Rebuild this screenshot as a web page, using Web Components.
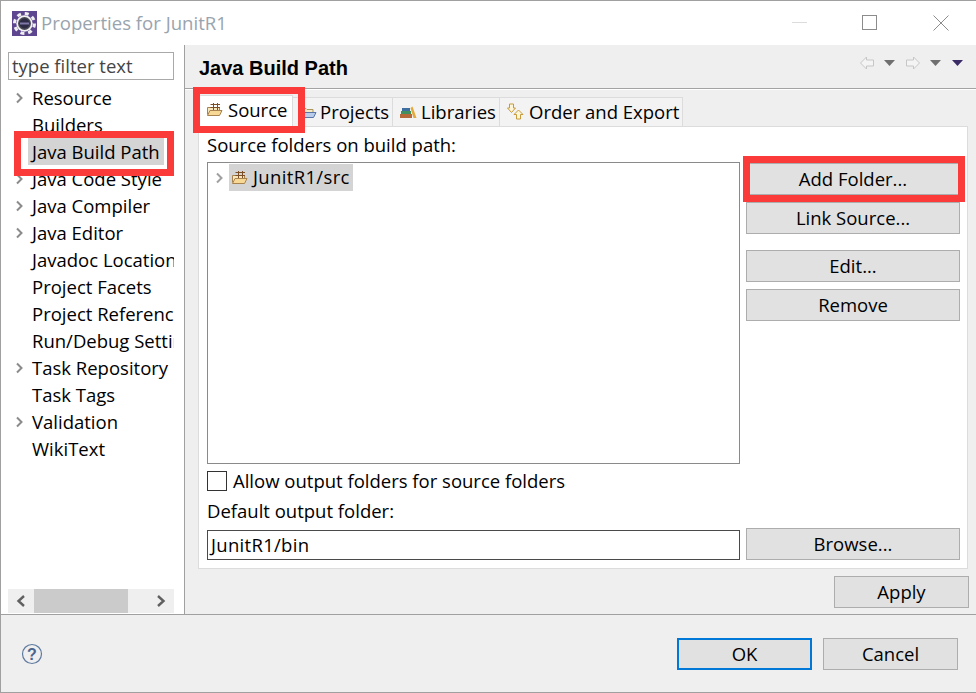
<!DOCTYPE html>
<html>
<head>
<meta charset="utf-8">
<title>Properties for JunitR1</title>
<style>
  html, body { margin: 0; padding: 0; background: #fff; }
  body { font: 18.5px "Open Sans", "Noto Sans", sans-serif; color: #000; }
</style>
</head>
<body>
<prefs-dialog></prefs-dialog>

<script>
const chevron = (color) => `<svg width="9" height="12" viewBox="0 0 9 12"><path d="M2 1.5 L6.5 6 L2 10.5" fill="none" stroke="${color}" stroke-width="2"/></svg>`;

const packageIcon = `<svg width="17" height="15" viewBox="0 0 17 15" style="display:block">
  <path d="M1.500 12.500 V5.500 H13.500 V8" fill="#f8e6bc" stroke="#a8834f"/>
  <path d="M1.500 13.500 L4 8.500 H16 L13.500 13.500 Z" fill="#f7d894" stroke="#a8834f"/>
  <path d="M7.500 1 V8 M11.500 1 V8 M4.500 2.500 H14 M4.500 5.500 H14" fill="none" stroke="#7d4f26"/>
</svg>`;

class TitleBar extends HTMLElement {
  constructor() { super(); this.attachShadow({ mode: 'open' }); }
  connectedCallback() {
    this.shadowRoot.innerHTML = `
    <style>
      :host { display: flex; align-items: center; height: 44px; padding-left: 11px; background: #fff; flex: none; }
      .logo { margin-right: 4px; display: block; }
      .name { color: #99a4ae; font-size: 18.6px; flex: 1; padding-bottom: 1px; }
      .ctl { width: 70.500px; height: 44px; display: flex; align-items: center; justify-content: center; }
    </style>
    <svg class="logo" width="25" height="25" viewBox="0 0 25 25">
      <rect width="25" height="25" fill="#5d4590"/>
      <circle cx="12.500" cy="12.500" r="10" fill="none" stroke="#eeeeee" stroke-width="3" stroke-dasharray="4 3.850"/>
      <circle cx="12.500" cy="12.500" r="8.200" fill="#f2f2f2"/>
      <circle cx="12.500" cy="12.500" r="6.500" fill="#4a4a55"/>
      <circle cx="12.500" cy="12.500" r="5" fill="#2c2a44"/>
      <path d="M8 12.500 h9" stroke="#7f78a8" stroke-width="2"/>
    </svg>
    <span class="name">Properties for JunitR1</span>
    <span class="ctl"><svg width="16" height="2"><rect width="15" height="1" fill="#dcdcdc"/></svg></span>
    <span class="ctl"><svg width="16" height="16"><rect x=".5" y=".5" width="14" height="14" fill="none" stroke="#8c8c8c"/></svg></span>
    <span class="ctl"><svg width="16" height="16"><path d="M.5 .5 L15.500 15.500 M15.500 .5 L.5 15.500" stroke="#8c8c8c"/></svg></span>`;
  }
}

class TreeRow extends HTMLElement {
  constructor() { super(); this.attachShadow({ mode: 'open' }); }
  connectedCallback() {
    const twist = this.hasAttribute('twist') ? chevron('#8b8b8b') : '';
    this.shadowRoot.innerHTML = `
    <style>
      :host { display: flex; align-items: center; height: 27px; white-space: nowrap; }
      .arrow { width: 20px; flex: none; display: flex; justify-content: center; padding-left: 3px; box-sizing: border-box; }
      .label { padding: 0 4px; line-height: 27px; }
      :host([selected]) .label { background: #d4d4d4; }
    </style>
    <span class="arrow">${twist}</span>
    <span class="label"><slot></slot></span>`;
  }
}

class SideBar extends HTMLElement {
  constructor() { super(); this.attachShadow({ mode: 'open' }); }
  connectedCallback() {
    this.shadowRoot.innerHTML = `
    <style>
      :host { display: flex; flex-direction: column; width: 184px; box-sizing: border-box; background: #fff; border-right: 1px solid #a0a0a0; flex: none; padding: 7px 10px 1px 7px; }
      .filter { height: 28px; box-sizing: border-box; border: 1px solid #a9a9a9; line-height: 26px; padding-left: 3px; color: #454545; flex: none; }
      .tree { flex: 1; margin-top: 4px; overflow: hidden; }
      .bar { height: 24px; background: #efefef; display: flex; align-items: center; justify-content: space-between; padding: 0 8px; flex: none; position: relative; }
      .thumb { position: absolute; left: 26px; top: 0; width: 94px; height: 24px; background: #cbcbcb; }
    </style>
    <div class="filter">type filter text</div>
    <div class="tree"><slot></slot></div>
    <div class="bar">
      <svg width="10" height="12" viewBox="0 0 10 12"><path d="M8 1 L2.500 6 L8 11" fill="none" stroke="#606060" stroke-width="2.400"/></svg>
      <span class="thumb"></span>
      <svg width="10" height="12" viewBox="0 0 10 12"><path d="M2 1 L7.500 6 L2 11" fill="none" stroke="#606060" stroke-width="2.400"/></svg>
    </div>`;
  }
}

class PageHeader extends HTMLElement {
  constructor() { super(); this.attachShadow({ mode: 'open' }); }
  connectedCallback() {
    const arrowL = `<svg width="14" height="14" viewBox="0.5 0 14 14"><path d="M7 1 L1 7 L7 13 V10 H14 V4 H7 Z" fill="#f4f4f4" stroke="#c6c6c6"/></svg>`;
    const arrowR = `<svg width="14" height="14" viewBox="0.5 0 14 14"><path d="M8 1 L14 7 L8 13 V10 H1 V4 H8 Z" fill="#f4f4f4" stroke="#c6c6c6"/></svg>`;
    const drop = (c) => `<svg width="11" height="6"><path d="M0 0 H11 L5.500 6 Z" fill="${c}"/></svg>`;
    this.shadowRoot.innerHTML = `
    <style>
      :host { display: flex; align-items: center; height: 44px; box-sizing: border-box; flex: none; padding: 0 13px 0 14px; border-bottom: 1px solid #a3a3a3; box-shadow: 0 1px 0 #fff; }
      .t { font-weight: 700; flex: 1; font-size: 20px; font-family: "Liberation Sans", sans-serif; padding-top: 4px; }
      .tools { display: flex; align-items: center; margin-bottom: 7px; }
      .tools > * { display: block; }
    </style>
    <span class="t">Java Build Path</span>
    <span class="tools">
      ${arrowL}<span style="width:10px"></span>${drop('#6f6f6f')}<span style="width:11px"></span>${arrowR}<span style="width:10px"></span>${drop('#6f6f6f')}<span style="width:11px"></span>${drop('#3a2a66')}
    </span>`;
  }
}

class TabItem extends HTMLElement {
  constructor() { super(); this.attachShadow({ mode: 'open' }); }
  connectedCallback() {
    this.shadowRoot.innerHTML = `
    <style>
      :host { display: flex; align-items: center; gap: var(--gap, 4px); height: 29px; box-sizing: border-box; padding: 0 0 2px 7px; background: #f3f3f3; border: 1px solid #dcdcdc; border-left: none; border-bottom: none; white-space: nowrap; margin-top: 2px; width: var(--w); }
      :host([active]) { background: #fff; height: 32px; margin-top: 0; border-left: 1px solid #dcdcdc; z-index: 1; padding: 0 0 5px 7px; gap: 5px; margin-bottom: -1px; }
    </style>
    <slot name="icon"></slot><span><slot></slot></span>`;
  }
}

class PushButton extends HTMLElement {
  constructor() { super(); this.attachShadow({ mode: 'open' }); }
  connectedCallback() {
    this.shadowRoot.innerHTML = `
    <style>
      :host { display: flex; align-items: center; justify-content: center; box-sizing: border-box; height: 32px; padding-bottom: 2px; background: #e1e1e1; border: 1px solid #adadad; white-space: nowrap; flex: none; }
      :host([primary]) { border: 2px solid #0078d7; }
    </style>
    <slot></slot>`;
  }
}

class SourcePage extends HTMLElement {
  constructor() { super(); this.attachShadow({ mode: 'open' }); }
  connectedCallback() {
    this.shadowRoot.innerHTML = `
    <style>
      :host { display: block; background: #fff; border: 1px solid #dcdcdc; height: 443px; box-sizing: border-box; margin-right: 8px; padding: 5px 8px 0 8px; }
      .cap { height: 26px; line-height: 26px; }
      .split { display: grid; grid-template-columns: 533px 214px; column-gap: 6px; }
      .tree { height: 302px; margin-top: 4px; box-sizing: border-box; border: 1px solid #8a8a8a; padding: 1px 0 0 0; }
      .btns { display: flex; flex-direction: column; margin-top: 5px; }
      .check { display: flex; align-items: center; height: 34px; gap: 6px; }
      .check span:last-child { padding-bottom: 2px; }
      .box { width: 20px; height: 20px; box-sizing: border-box; border: 1px solid #333; background: #fff; }
      .field { height: 30px; box-sizing: border-box; border: 1px solid #4a4a4a; padding-left: 3px; line-height: 27px; margin-top: 5px; letter-spacing: .3px; }
      .row { align-items: center; }
      .row push-button { margin-top: 4px; }
      .node { display: flex; align-items: center; height: 27px; }
      .twist { width: 22px; display: flex; justify-content: center; flex: none; }
      .sel { display: flex; align-items: center; gap: 5px; background: #d4d4d4; height: 27px; margin-left: -1px; padding: 0 3px 0 2px; letter-spacing: .35px; }
      .sel span { padding-bottom: 2px; }
    </style>
    <div class="cap">Source folders on build path:</div>
    <div class="split">
      <div class="tree">
        <div class="node">
          <span class="twist">${chevron('#a0a0a0')}</span>
          <span class="sel">${packageIcon}<span>JunitR1/src</span></span>
        </div>
      </div>
      <div class="btns">
        <push-button>Add Folder...</push-button>
        <push-button style="margin-top:7px">Link Source...</push-button>
        <push-button style="margin-top:16px">Edit...</push-button>
        <push-button style="margin-top:7px">Remove</push-button>
      </div>
    </div>
    <div class="check"><span class="box"></span><span>Allow output folders for source folders</span></div>
    <div class="cap">Default output folder:</div>
    <div class="split row">
      <div class="field">JunitR1/bin</div>
      <push-button>Browse...</push-button>
    </div>`;
  }
}

class PrefsDialog extends HTMLElement {
  constructor() { super(); this.attachShadow({ mode: 'open' }); }
  connectedCallback() {
    this.shadowRoot.innerHTML = `
    <style>
      :host { display: flex; flex-direction: column; position: relative; width: 976px; height: 693px; box-sizing: border-box; overflow: hidden; border-top: 1px solid #a0a0a0; border-left: 1px solid #a0a0a0; border-bottom: 1px solid #a0a0a0; background: #fff; }
      .main { display: flex; height: 569px; flex: none; }
      .right { flex: 1; background: #efefef; display: flex; flex-direction: column; min-width: 0; }
      .body { padding: 6px 0 0 13px; flex: 1; }
      .tabs { display: flex; position: relative; height: 32px; margin-bottom: -1px; }
      .apply { display: flex; justify-content: flex-end; padding: 7px 7px 0 0; }
      .foot { flex: 1; display: flex; align-items: center; background: #efefef; border-top: 1px solid #a0a0a0; padding: 0 18px 0 20px; gap: 11px; }
      .foot svg { margin-right: auto; display: block; }
      .foot push-button { padding-bottom: 0; }
      .mark { position: absolute; box-sizing: border-box; border: 7px solid #fb3a3a; pointer-events: none; z-index: 5; }
    </style>
    <title-bar></title-bar>
    <div class="main">
      <side-bar>
        <tree-row twist>Resource</tree-row>
        <tree-row>Builders</tree-row>
        <tree-row selected>Java Build Path</tree-row>
        <tree-row twist>Java Code Style</tree-row>
        <tree-row twist>Java Compiler</tree-row>
        <tree-row twist>Java Editor</tree-row>
        <tree-row>Javadoc Location</tree-row>
        <tree-row>Project Facets</tree-row>
        <tree-row>Project References</tree-row>
        <tree-row>Run/Debug Settings</tree-row>
        <tree-row twist>Task Repository</tree-row>
        <tree-row>Task Tags</tree-row>
        <tree-row twist>Validation</tree-row>
        <tree-row>WikiText</tree-row>
      </side-bar>
      <div class="right">
        <page-header></page-header>
        <div class="body">
          <div class="tabs">
            <tab-item active style="--w:95px">
              <span slot="icon">${packageIcon}</span>Source
            </tab-item>
            <tab-item style="--w:100px;--gap:3px">
              <svg slot="icon" width="17" height="15" viewBox="0 0 17 15"><path d="M1.500 13 V4.500 H6 L7 5.500 H13 V8" fill="#f6e8c4" stroke="#a8965a"/><path d="M1.500 13.500 L4 8.500 H16 L13.500 13.500 Z" fill="#b9cdea" stroke="#5a74a8"/></svg>Projects
            </tab-item>
            <tab-item style="--w:107px">
              <svg slot="icon" width="17" height="15" viewBox="0 0 17 15"><rect x="0" y="10" width="12" height="4" fill="#b5683a"/><rect x="1" y="7" width="10" height="3" fill="#3f8f5f"/><rect x="2" y="4" width="8" height="3" fill="#3f6fa0"/><path d="M10.500 4 L12.500 2.500 L16.500 14 H13.500 Z" fill="#e3a93c"/></svg>Libraries
            </tab-item>
            <tab-item style="--w:183px;--gap:5px">
              <svg slot="icon" width="17" height="17" viewBox="0 0 17 17"><path d="M2.500 1 H6.500 V5 H8.500 L4.500 9.500 L.5 5 H2.500 Z" fill="#fdf6d8" stroke="#c79a3a"/><path d="M11.500 7 L16 11.500 H13.500 V16 H9.500 V11.500 H7 Z" fill="#fdf6d8" stroke="#c79a3a"/></svg>Order and Export
            </tab-item>
          </div>
          <source-page></source-page>
          <div class="apply"><push-button style="width:135px">Apply</push-button></div>
        </div>
      </div>
    </div>
    <div class="foot">
      <svg width="22" height="22" viewBox="0 0 22 22"><circle cx="11" cy="11" r="9.500" fill="none" stroke="#5e7aa0" stroke-width="1.200"/><text x="11" y="16.500" text-anchor="middle" font-family="Liberation Sans, sans-serif" font-weight="700" font-size="16" fill="#4a6690">?</text></svg>
      <push-button primary style="width:135px">OK</push-button>
      <push-button style="width:135px">Cancel</push-button>
    </div>
    <span class="mark" style="left:13px;top:130px;width:160px;height:45px"></span>
    <span class="mark" style="left:192px;top:86px;width:112px;height:46px"></span>
    <span class="mark" style="left:742px;top:155px;width:222px;height:46px"></span>`;
  }
}

customElements.define('title-bar', TitleBar);
customElements.define('tree-row', TreeRow);
customElements.define('side-bar', SideBar);
customElements.define('page-header', PageHeader);
customElements.define('tab-item', TabItem);
customElements.define('push-button', PushButton);
customElements.define('source-page', SourcePage);
customElements.define('prefs-dialog', PrefsDialog);
</script>
</body>
</html>
